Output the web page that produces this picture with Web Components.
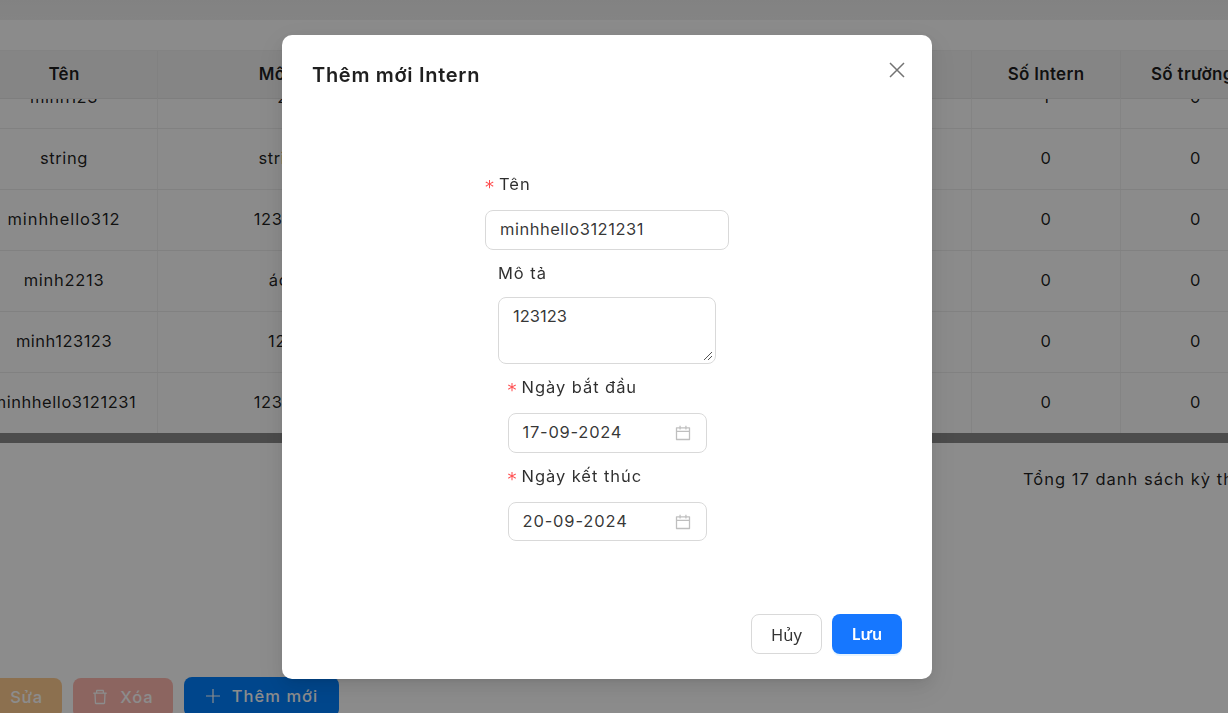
<!DOCTYPE html>
<html lang="vi">
<head>
<meta charset="utf-8">
<title>Intern</title>
<style>
html,body{margin:0;height:100%;overflow:hidden;background:#fff;}
body{font-family:Inter,"Noto Sans",sans-serif;font-size:16.5px;color:rgba(0,0,0,.88);}
</style>
</head>
<body>
<template id="t-page">
  <style>
    :host{display:flex;flex-direction:column;height:713px;overflow:hidden;background:#fff;}
    .band{height:20px;flex:none;background:linear-gradient(#ededed,#f0f0f0);}
    .gap{height:30px;flex:none;background:#fdfdfd;}
    .total{flex:none;height:72px;display:flex;align-items:center;padding-left:1023px;white-space:nowrap;letter-spacing:1px;box-sizing:border-box;}
    .grow{flex:1;}
    .actions{flex:none;height:36px;display:flex;gap:11px;margin-left:-30px;align-items:flex-start;}
  </style>
  <div class="band"></div>
  <div class="gap"></div>
  <slot name="table"></slot>
  <div class="total">Tổng 17 danh sách kỳ thực tập</div>
  <div class="grow"></div>
  <div class="actions"><slot name="actions"></slot></div>
</template>

<template id="t-table">
  <style>
    :host{display:block;flex:none;overflow:hidden;}
    .grid{margin-left:-29px;width:1400px;}
    .row{display:grid;grid-template-columns:187px 250px 564px 149px 150px 100px;}
    .head{height:49px;background:#f3f3f3;border-top:1px solid #eee;box-sizing:border-box;position:relative;z-index:1;border-bottom:1px solid #e6e6e6;}
    .head div{font-size:17px;font-weight:600;letter-spacing:.3px;display:flex;align-items:center;justify-content:center;white-space:nowrap;border-right:1px solid #ececec;overflow:hidden;height:48px;box-sizing:border-box;padding-bottom:2px;}
    .scroll{height:334px;overflow:hidden;}
    .rows{margin-top:-31px;}
    .rows .row{height:61px;box-sizing:border-box;border-bottom:1px solid #ececec;background:#fefefe;}
    .rows div div{display:flex;align-items:center;justify-content:center;white-space:nowrap;letter-spacing:var(--ls,.6px);border-right:1px solid #f0f0f0;box-sizing:border-box;overflow:hidden;padding-bottom:2px;}
    .bar{height:10px;background:#8a8a8a;}
  </style>
  <div class="grid">
    <div class="row head"><div>Tên</div><div>Mô tả</div><div></div><div>Số Intern</div><div style="justify-content:flex-start;padding-left:30px">Số trường</div><div></div></div>
    <div class="scroll"><div class="rows" id="rows"></div></div>
  </div>
  <div class="bar"></div>
</template>

<template id="t-modal">
  <style>
    :host{position:fixed;inset:0;display:block;background:rgba(0,0,0,.45);z-index:10;}
    .box{position:absolute;left:282px;top:35px;width:650px;height:644px;box-sizing:border-box;background:#fff;border-radius:10px;padding:26px 30px 25px;display:flex;flex-direction:column;
      box-shadow:0 6px 16px 0 rgba(0,0,0,.08),0 3px 6px -4px rgba(0,0,0,.12),0 9px 28px 8px rgba(0,0,0,.05);}
    h2{margin:0;font-size:20px;line-height:28px;font-weight:600;letter-spacing:.7px;color:rgba(0,0,0,.88);}
    .close{position:absolute;top:26px;right:26px;width:18px;height:18px;color:rgba(0,0,0,.55);}
    .close svg{display:block;width:18px;height:18px;}
    .body{flex:1;display:flex;flex-direction:column;align-items:center;padding-top:83px;}
    .foot{display:flex;justify-content:flex-end;gap:10px;}
  </style>
  <div class="box">
    <h2><slot name="title"></slot></h2>
    <div class="close"><svg viewBox="0 0 18 18" fill="none" stroke="currentColor" stroke-width="1.5"><path d="M2 2l14 14M16 2L2 16"/></svg></div>
    <div class="body"><slot></slot></div>
    <div class="foot"><slot name="foot"></slot></div>
  </div>
</template>

<template id="t-field">
  <style>
    :host{display:block;box-sizing:border-box;}
    label{display:block;height:24px;line-height:24px;letter-spacing:.95px;color:rgba(0,0,0,.82);white-space:nowrap;}
    .star{display:inline-block;width:14px;color:#ff4d4f;font-family:"DejaVu Sans",sans-serif;font-size:18px;line-height:1;vertical-align:-3px;letter-spacing:0;}
    .ctl{margin-top:14px;}
    :host([offset]) .ctl{margin-top:12px;}
  </style>
  <label><span class="star" id="s">*</span><span id="l"></span></label>
  <div class="ctl"><slot></slot></div>
</template>

<template id="t-input">
  <style>
    :host{display:flex;align-items:center;box-sizing:border-box;border:1px solid #d9d9d9;border-radius:8px;background:#fff;padding:0 14px 2px;height:var(--h,40px);letter-spacing:var(--ls,.45px);color:rgba(0,0,0,.8);white-space:nowrap;position:relative;}
    :host([area]){align-items:flex-start;padding-top:6px;height:67px;line-height:24px;}
    svg{position:absolute;}
    .cal{right:15px;top:50%;margin-top:-8px;width:16px;height:16px;color:rgba(0,0,0,.25);}
    .grip{right:2px;bottom:2px;width:10px;height:10px;color:#555;}
  </style>
  <slot></slot>
  <svg class="cal" id="cal" viewBox="64 64 896 896" fill="currentColor"><path d="M880 184H712v-64c0-4.400-3.600-8-8-8h-56c-4.400 0-8 3.600-8 8v64H384v-64c0-4.400-3.600-8-8-8h-56c-4.400 0-8 3.600-8 8v64H144c-17.700 0-32 14.300-32 32v664c0 17.700 14.300 32 32 32h736c17.700 0 32-14.300 32-32V216c0-17.700-14.300-32-32-32zm-40 656H184V460h656v380zM184 392V256h128v48c0 4.400 3.600 8 8 8h56c4.400 0 8-3.600 8-8v-48h256v48c0 4.400 3.600 8 8 8h56c4.400 0 8-3.600 8-8v-48h128v136H184z"/></svg>
  <svg class="grip" id="grip" viewBox="0 0 10 10" fill="none" stroke="currentColor" stroke-width="1"><path d="M1 9l8-8M5 9l4-4"/></svg>
</template>

<template id="t-btn">
  <style>
    :host{display:inline-flex;align-items:center;justify-content:center;box-sizing:border-box;height:40px;border-radius:8px;white-space:nowrap;gap:var(--gap,12px);
      background:var(--bg,#fff);color:var(--fg,rgba(0,0,0,.8));border:1px solid var(--bd,transparent);font-family:var(--ff,inherit);font-weight:var(--fw,400);letter-spacing:var(--ls,0);}
    ::slotted(svg){width:16px;height:16px;flex:none;}
  </style>
  <slot></slot>
</template>

<app-page>
  <data-table slot="table"></data-table>
  <ui-btn slot="actions" style="width:92px;margin-top:1px;--bg:#ffcc91;--fg:#fff;--fw:500;--ls:.6px;padding:0 0 3px 21px;">Sửa</ui-btn>
  <ui-btn slot="actions" style="width:100px;margin-top:1px;--bg:#ffb8af;--fg:#fff;--fw:500;--ls:.9px;padding-bottom:3px;">
    <svg viewBox="64 64 896 896" fill="currentColor"><path d="M360 184h-8c4.400 0 8-3.600 8-8v8h304v-8c0 4.400 3.600 8 8 8h-8v72h72v-80c0-35.300-28.700-64-64-64H352c-35.300 0-64 28.700-64 64v80h72v-72zm504 72H160c-17.700 0-32 14.300-32 32v32c0 4.400 3.600 8 8 8h60.400l24.700 523c1.600 34.100 29.800 61 63.900 61h454c34.200 0 62.300-26.800 63.900-61l24.700-523H888c4.400 0 8-3.600 8-8v-32c0-17.700-14.300-32-32-32zM731.300 840H292.700l-24.200-512h487l-24.200 512z"/></svg>Xóa</ui-btn>
  <ui-btn slot="actions" style="width:155px;--bg:#0080ff;--fg:#fff;--fw:500;--ls:1.05px;--gap:11px;padding-bottom:2px;">
    <svg viewBox="0 0 16 16" fill="none" stroke="currentColor" stroke-width="1.2"><path d="M8 1v14M1 8h14"/></svg>Thêm mới</ui-btn>
</app-page>

<ui-modal>
  <span slot="title">Thêm mới Intern</span>
  <ui-field label="Tên" required style="width:244px">
    <ui-input style="--ls:.5px">minhhello3121231</ui-input>
  </ui-field>
  <ui-field label="Mô tả" style="width:218px;margin-top:11px" offset>
    <ui-input area grip style="--ls:0">123123</ui-input>
  </ui-field>
  <ui-field label="Ngày bắt đầu" required style="width:199px;margin-top:11px">
    <ui-input cal style="--ls:.75px">17-09-2024</ui-input>
  </ui-field>
  <ui-field label="Ngày kết thúc" required style="width:199px;margin-top:11px">
    <ui-input cal style="--ls:.85px;--h:39px">20-09-2024</ui-input>
  </ui-field>
  <ui-btn slot="foot" style="width:71px;--bd:#d9d9d9;--ff:'Noto Sans',sans-serif;">Hủy</ui-btn>
  <ui-btn slot="foot" style="width:70px;font-size:16px;--bg:#1677ff;--fg:#fff;--ff:'Noto Sans',sans-serif;--fw:600;box-shadow:0 2px 0 rgba(5,145,255,.1)">Lưu</ui-btn>
</ui-modal>

<script>
function shadow(el, id) {
  const root = el.attachShadow({ mode: "open" });
  root.appendChild(document.getElementById(id).content.cloneNode(true));
  return root;
}
class AppPage extends HTMLElement {
  constructor() { super(); shadow(this, "t-page"); }
}
class DataTable extends HTMLElement {
  constructor() {
    super();
    const root = shadow(this, "t-table");
    // name, description, interns, schools, letter spacing of the name
    const rows = [
      ["minh123", "2", "1", "0", ".5px"],
      ["string", "string", "0", "0", ".6px"],
      ["minhhello312", "123123", "0", "0", ".9px"],
      ["minh2213", "ádf", "0", "0", ".7px"],
      ["minh123123", "123", "0", "0", ".5px"],
      ["minhhello3121231", "123123", "0", "0", ".55px"],
    ];
    root.getElementById("rows").innerHTML = rows.map(r =>
      `<div class="row"><div style="--ls:${r[4]}">${r[0]}</div><div>${r[1]}</div><div></div><div>${r[2]}</div><div>${r[3]}</div><div></div></div>`
    ).join("");
  }
}
class UiModal extends HTMLElement {
  constructor() { super(); shadow(this, "t-modal"); }
}
class UiField extends HTMLElement {
  constructor() { super(); this._r = shadow(this, "t-field"); }
  connectedCallback() {
    this._r.getElementById("l").textContent = this.getAttribute("label");
    if (!this.hasAttribute("required")) this._r.getElementById("s").remove();
  }
}
class UiInput extends HTMLElement {
  constructor() { super(); this._r = shadow(this, "t-input"); }
  connectedCallback() {
    if (!this.hasAttribute("cal")) this._r.getElementById("cal").remove();
    if (!this.hasAttribute("grip")) this._r.getElementById("grip").remove();
  }
}
class UiBtn extends HTMLElement {
  constructor() { super(); shadow(this, "t-btn"); }
}
customElements.define("app-page", AppPage);
customElements.define("data-table", DataTable);
customElements.define("ui-modal", UiModal);
customElements.define("ui-field", UiField);
customElements.define("ui-input", UiInput);
customElements.define("ui-btn", UiBtn);
</script>
</body>
</html>
